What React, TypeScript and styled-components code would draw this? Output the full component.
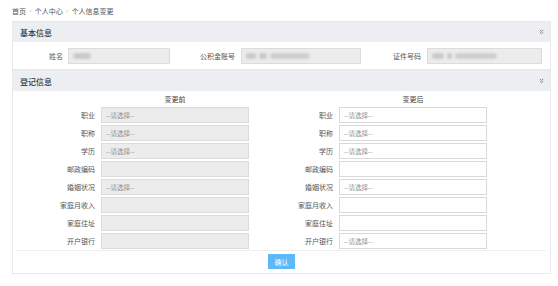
import React from "react";
import styled, { createGlobalStyle } from "styled-components";

const GlobalStyle = createGlobalStyle`
  body {
    margin: 0;
    background: #fff;
    font-family: "Noto Sans CJK SC", "Noto Sans", sans-serif;
    color: #555;
  }
`;

const Page = styled.div`
  width: 558px;
  padding: 0 7px 0 12px;
  box-sizing: border-box;
`;

const Breadcrumb = styled.div`
  height: 21px;
  display: flex;
  align-items: center;
  gap: 3.5px;
  font-size: 7px;
  color: #555;
`;

const Sep = styled.span`
  color: #aaa;
  font-size: 6px;
`;

const Panel = styled.div`
  border: 1px solid #e8e9ec;
  background: #fff;
`;

const PanelHeader = styled.div`
  height: 20px;
  background: #eceef2;
  display: flex;
  align-items: center;
  justify-content: space-between;
  padding: 0 6px 0 7px;
  font-size: 8px;
  font-weight: 500;
  color: #333;
`;

const BasicGrid = styled.div`
  display: grid;
  grid-template-columns: 55px 102px 71px 120px 66px 115px;
  align-items: center;
  padding: 6px 0 5px;
`;

const Label = styled.div<{ $pad?: number }>`
  font-size: 7px;
  color: #555;
  text-align: right;
  padding-right: ${(p) => p.$pad ?? 6}px;
  white-space: nowrap;
`;

const Field = styled.div<{ $disabled?: boolean }>`
  height: 16px;
  box-sizing: border-box;
  border: 1px solid ${(p) => (p.$disabled ? "#dcdcdc" : "#d9d9d9")};
  background: ${(p) => (p.$disabled ? "#ececec" : "#fff")};
  display: flex;
  align-items: center;
  gap: 3px;
  padding-left: 4px;
  font-size: 6.5px;
  color: #8f8f8f;
`;

const Blur = styled.span<{ $w: number; $shade?: string }>`
  display: inline-block;
  width: ${(p) => p.$w}px;
  height: 6px;
  border-radius: 3px;
  background: ${(p) => p.$shade ?? "#c9c9c9"};
  filter: blur(1.2px);
`;

const RegBody = styled.div`
  padding: 0 4px 4px;
`;

const Columns = styled.div`
  display: grid;
  grid-template-columns: 238px 238px;
  padding-left: 23px;
`;

const Heading = styled.div`
  height: 15px;
  margin-left: 61px;
  width: 148px;
  display: flex;
  align-items: center;
  justify-content: center;
  font-size: 7px;
  color: #444;
`;

const Rows = styled.div`
  display: flex;
  flex-direction: column;
  gap: 2px;
  padding-top: 1px;
`;

const Row = styled.div`
  display: grid;
  grid-template-columns: 55px 148px;
  column-gap: 6px;
  align-items: center;
`;

const RowLabel = styled.div`
  font-size: 7px;
  color: #555;
  text-align: right;
  white-space: nowrap;
`;

const Divider = styled.div`
  height: 1px;
  background: #eceef0;
  margin-top: 1px;
`;

const Actions = styled.div`
  display: flex;
  justify-content: center;
  padding-top: 3px;
`;

const Button = styled.button`
  width: 27px;
  height: 15px;
  border: 0;
  padding: 0;
  background: #5cb8f6;
  color: #fff;
  font-family: inherit;
  font-size: 7px;
`;

const Chevron = () => (
  <svg width="5" height="6" viewBox="0 0 5 6">
    <path d="M0.8 1 L2.5 2.4 L4.2 1 M0.8 3.2 L2.5 4.6 L4.2 3.2" stroke="#888" strokeWidth="1" fill="none" />
  </svg>
);

const PLACE = "--请选择--";

const before: [string, string][] = [
  ["职业", PLACE],
  ["职称", PLACE],
  ["学历", PLACE],
  ["邮政编码", ""],
  ["婚姻状况", PLACE],
  ["家庭月收入", ""],
  ["家庭住址", ""],
  ["开户银行", ""],
];

const after: [string, string][] = [
  ["职业", PLACE],
  ["职称", PLACE],
  ["学历", PLACE],
  ["邮政编码", ""],
  ["婚姻状况", PLACE],
  ["家庭月收入", ""],
  ["家庭住址", ""],
  ["开户银行", PLACE],
];

function FormColumn(props: { title: string; items: [string, string][]; disabled?: boolean }) {
  const { title, items, disabled } = props;
  return (
    <div>
      <Heading>{title}</Heading>
      <Rows>
        {items.map(([label, value]) => (
          <Row key={label}>
            <RowLabel>{label}</RowLabel>
            <Field $disabled={disabled}>{value}</Field>
          </Row>
        ))}
      </Rows>
    </div>
  );
}

export default function App() {
  return (
    <Page>
      <GlobalStyle />
      <Breadcrumb>
        <span>首页</span>
        <Sep>›</Sep>
        <span>个人中心</span>
        <Sep>›</Sep>
        <span>个人信息变更</span>
      </Breadcrumb>

      <Panel>
        <PanelHeader>
          基本信息
          <Chevron />
        </PanelHeader>
        <BasicGrid>
          <Label $pad={5}>姓名</Label>
          <Field $disabled>
            <Blur $w={18} />
          </Field>
          <Label>公积金账号</Label>
          <Field $disabled>
            <Blur $w={10} />
            <Blur $w={8} />
            <Blur $w={40} $shade="#cfcfcf" />
          </Field>
          <Label>证件号码</Label>
          <Field $disabled>
            <Blur $w={12} />
            <Blur $w={5} />
            <Blur $w={42} $shade="#cfcfcf" />
          </Field>
        </BasicGrid>
      </Panel>

      <Panel>
        <PanelHeader>
          登记信息
          <Chevron />
        </PanelHeader>
        <RegBody>
          <Columns>
            <FormColumn title="变更前" items={before} disabled />
            <FormColumn title="变更后" items={after} />
          </Columns>
          <Divider />
          <Actions>
            <Button>确认</Button>
          </Actions>
        </RegBody>
      </Panel>
    </Page>
  );
}
